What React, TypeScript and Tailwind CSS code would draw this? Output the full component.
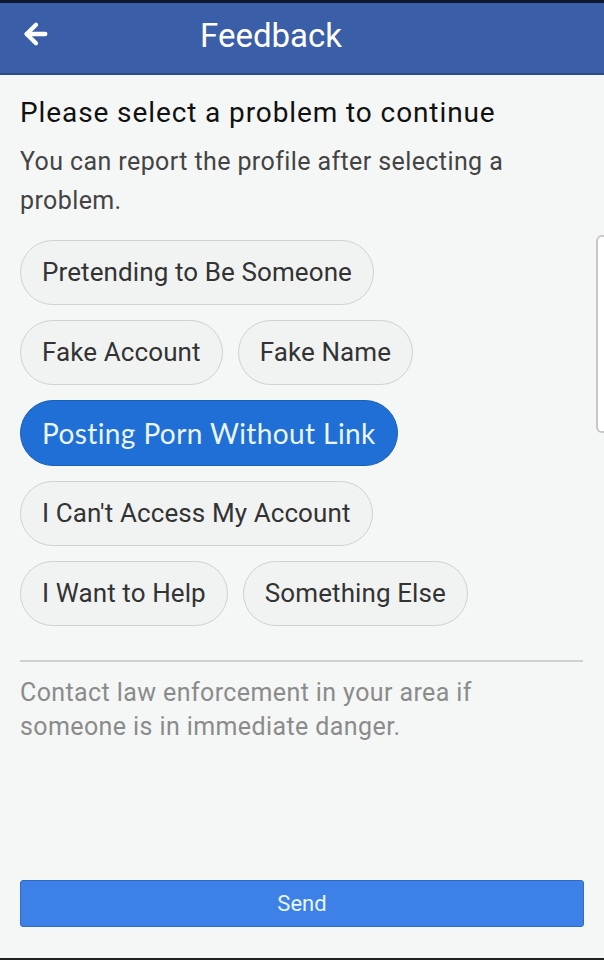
import { ArrowLeft } from 'lucide-react';

const rows: { label: string; selected?: boolean }[][] = [
  [{ label: 'Pretending to Be Someone' }],
  [{ label: 'Fake Account' }, { label: 'Fake Name' }],
  [{ label: 'Posting Porn Without Link', selected: true }],
  [{ label: "I Can't Access My Account" }],
  [{ label: 'I Want to Help' }, { label: 'Something Else' }],
];

function Chip({ label, selected }: { label: string; selected?: boolean }) {
  if (selected) {
    return (
      <div className="h-[66px] flex items-center px-[21px] rounded-full bg-[#1f6fd6] border border-[#1a5fb8] text-[#eaf6ff] text-[28px] font-['Lato',sans-serif] tracking-[0.4px]">
        {label}
      </div>
    );
  }
  return (
    <div className="h-[65px] flex items-center px-[21px] rounded-full bg-[#f1f3f2] border border-[#cfd2d1] text-[#333] text-[26px] tracking-[0.1px]">
      {label}
    </div>
  );
}

export default function App() {
  return (
    <div className="relative w-[604px] h-[960px] bg-[#f5f7f6] font-['Roboto',sans-serif] flex flex-col overflow-hidden">
      <div className="h-[3px] bg-[#101830]" />
      {/* Header */}
      <header className="h-[72px] bg-[#3b5ea8] border-b-2 border-[#2c4a86] flex items-center px-[20px] relative">
        <ArrowLeft size={32} strokeWidth={3.2} className="text-white -mt-[8px]" />
        <span className="absolute left-[200px] top-[8px] text-white text-[33px]">Feedback</span>
      </header>

      <main className="flex-1 flex flex-col px-[20px]">
        <h1 className="mt-[21px] text-[28px] text-[#111] leading-[34px] tracking-[0.9px]">Please select a problem to continue</h1>
        <p className="mt-[12px] text-[25px] text-[#444] leading-[39px] tracking-[0.4px] w-[520px]">
          You can report the profile after selecting a problem.
        </p>

        <div className="mt-[20px] flex flex-col gap-[15px]">
          {rows.map((row, i) => (
            <div key={i} className="flex gap-[15px]">
              {row.map((c) => (
                <Chip key={c.label} label={c.label} selected={c.selected} />
              ))}
            </div>
          ))}
        </div>

        <div className="mt-[34px] border-t-2 border-[#cdd0cf] mr-[1px]" />
        <p className="mt-[14px] text-[25px] text-[#8a8c8b] leading-[34px] tracking-[0.4px] w-[500px]">
          Contact law enforcement in your area if someone is in immediate danger.
        </p>

        <div className="flex-1" />
        <button className="h-[47px] mb-[31px] rounded-[3px] bg-[#3d80e8] border border-[#2f6cc8] text-[#e8f6ff] text-[22px]">
          Send
        </button>
      </main>
      <div className="h-[2px] bg-[#222]" />

      {/* edge handle overlay */}
      <div className="absolute left-[596px] top-[235px] w-[20px] h-[198px] rounded-[6px] border-2 border-[#c8c8c8] bg-white" />
    </div>
  );
}
